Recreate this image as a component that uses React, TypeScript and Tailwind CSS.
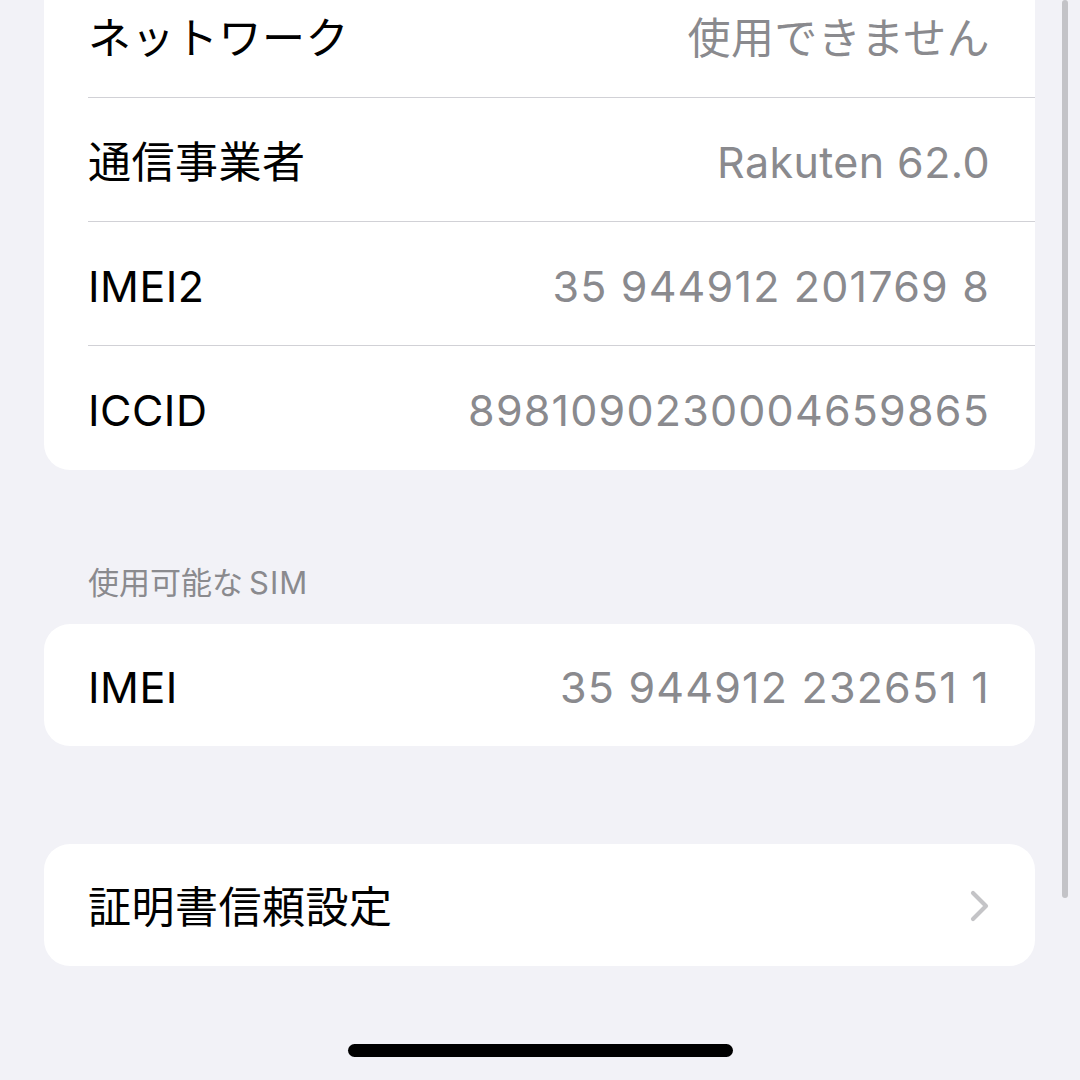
import { ReactNode } from "react";

const font = { fontFamily: 'Inter, "Noto Sans CJK JP", sans-serif' };

type RowProps = {
  label: string;
  value?: string;
  last?: boolean;
  wide?: boolean;
  trailing?: ReactNode;
};

const Row = ({ label, value, last, wide, trailing }: RowProps) => (
  <div className="pl-[44px]">
    <div
      className={`flex h-[124px] items-center justify-between pt-[5px] pr-[45px] ${
        last ? "" : "border-b-[1.5px] border-[#d1d1d6]"
      }`}
    >
      <span className="text-[43px] leading-none tracking-[0.5px] text-black">{label}</span>
      {value && (
        <span
          className={`text-[43px] leading-none text-[#8a8a8e] ${
            wide ? "tracking-[1.2px]" : "tracking-[0.4px]"
          }`}
        >
          {value}
        </span>
      )}
      {trailing}
    </div>
  </div>
);

const Chevron = () => (
  <svg width="22" height="34" viewBox="0 0 22 34" className="mr-[-1px] -mt-[4px]">
    <polyline
      points="4,4 17,17 4,30"
      fill="none"
      stroke="#c4c4c7"
      strokeWidth="4.2"
      strokeLinecap="round"
      strokeLinejoin="round"
    />
  </svg>
);

export default function App() {
  return (
    <div className="relative h-[1080px] w-[1080px] overflow-hidden bg-[#f2f2f7]" style={font}>
      <div className="ml-[44px] mr-[45px] flex flex-col">
        <div className="-mt-[26px] overflow-hidden rounded-[26px] bg-white">
          <Row label="ネットワーク" value="使用できません" />
          <Row label="通信事業者" value="Rakuten 62.0" />
          <Row label="IMEI2" value="35 944912 201769 8" wide />
          <Row label="ICCID" value="8981090230004659865" wide last />
        </div>

        <div className="mt-[95px] mb-[23px] pl-[44px] text-[31px] leading-[36px] text-[#8a8a8e]">
          使用可能な<span className="ml-[6px] tracking-[1px]">SIM</span>
        </div>

        <div className="overflow-hidden rounded-[26px] bg-white [&>div>div]:h-[122px]">
          <Row label="IMEI" value="35 944912 232651 1" wide last />
        </div>

        <div className="mt-[98px] overflow-hidden rounded-[26px] bg-white [&>div>div]:h-[122px]">
          <Row label="証明書信頼設定" last trailing={<Chevron />} />
        </div>
      </div>

      {/* scroll indicator */}
      <div className="absolute right-[12px] top-0 h-[898px] w-[6px] rounded-full bg-[#c3c3c7]" />

      {/* home indicator */}
      <div className="absolute bottom-[23px] left-[348px] h-[13px] w-[385px] rounded-full bg-black" />
    </div>
  );
}
